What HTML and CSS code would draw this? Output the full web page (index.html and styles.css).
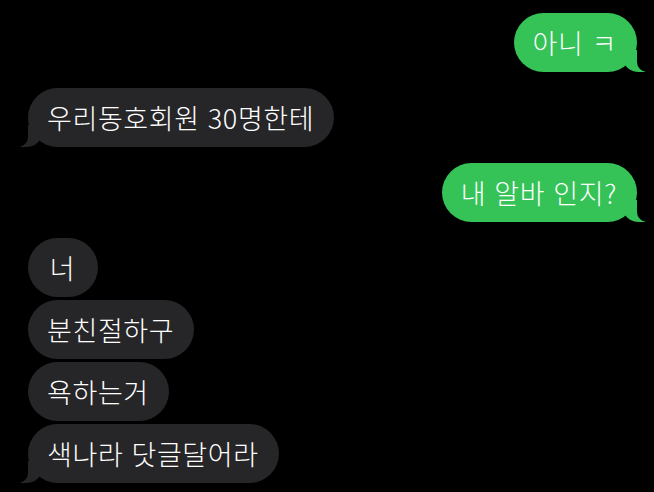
FILE: index.html
```html
<!DOCTYPE html>
<html lang="ko">
<head>
<meta charset="utf-8">
<link rel="stylesheet" href="styles.css">
</head>
<body>
<div class="chat">
  <div class="group out">
    <div class="bubble tail">아니 ㅋ</div>
  </div>
  <div class="group in">
    <div class="bubble tail">우리동호회원 30명한테</div>
  </div>
  <div class="group out">
    <div class="bubble tail">내 알바 인지?</div>
  </div>
  <div class="group in">
    <div class="bubble short">너</div>
    <div class="bubble">분친절하구</div>
    <div class="bubble">욕하는거</div>
    <div class="bubble tail">색나라 닷글달어라</div>
  </div>
</div>
</body>
</html>
```
FILE: styles.css
```css
html, body {
  margin: 0;
  padding: 0;
  background: #000;
}
.chat {
  width: 654px;
  height: 492px;
  box-sizing: border-box;
  padding: 13px 17px 0 28px;
  display: flex;
  flex-direction: column;
  gap: 16px;
  overflow: hidden;
  font-family: "Noto Sans CJK KR", "Noto Sans", sans-serif;
  font-size: 27px;
  font-weight: 300;
  letter-spacing: 0.6px;
  color: #fff;
}
.group {
  display: flex;
  flex-direction: column;
  gap: 3px;
}
.group.out { align-items: flex-end; }
.group.in { align-items: flex-start; }
.bubble {
  position: relative;
  height: 59px;
  line-height: 59px;
  padding: 0 20px 0 19px;
  border-radius: 30px;
  white-space: nowrap;
}
.bubble.short {
  box-sizing: border-box;
  min-width: 70px;
  text-align: center;
}
.out .bubble { background: #35c357; }
.in .bubble { background: #262628; }

.bubble.tail::before,
.bubble.tail::after {
  content: "";
  position: absolute;
  bottom: 0;
  height: 22px;
}
.out .bubble.tail::before {
  right: -8px;
  width: 22px;
  background: #35c357;
  border-bottom-left-radius: 16px 14px;
}
.out .bubble.tail::after {
  right: -26px;
  width: 26px;
  background: #000;
  border-bottom-left-radius: 10px;
}
.in .bubble.tail::before {
  left: -8px;
  width: 22px;
  background: #262628;
  border-bottom-right-radius: 16px 14px;
}
.in .bubble.tail::after {
  left: -26px;
  width: 26px;
  background: #000;
  border-bottom-right-radius: 10px;
}
```
